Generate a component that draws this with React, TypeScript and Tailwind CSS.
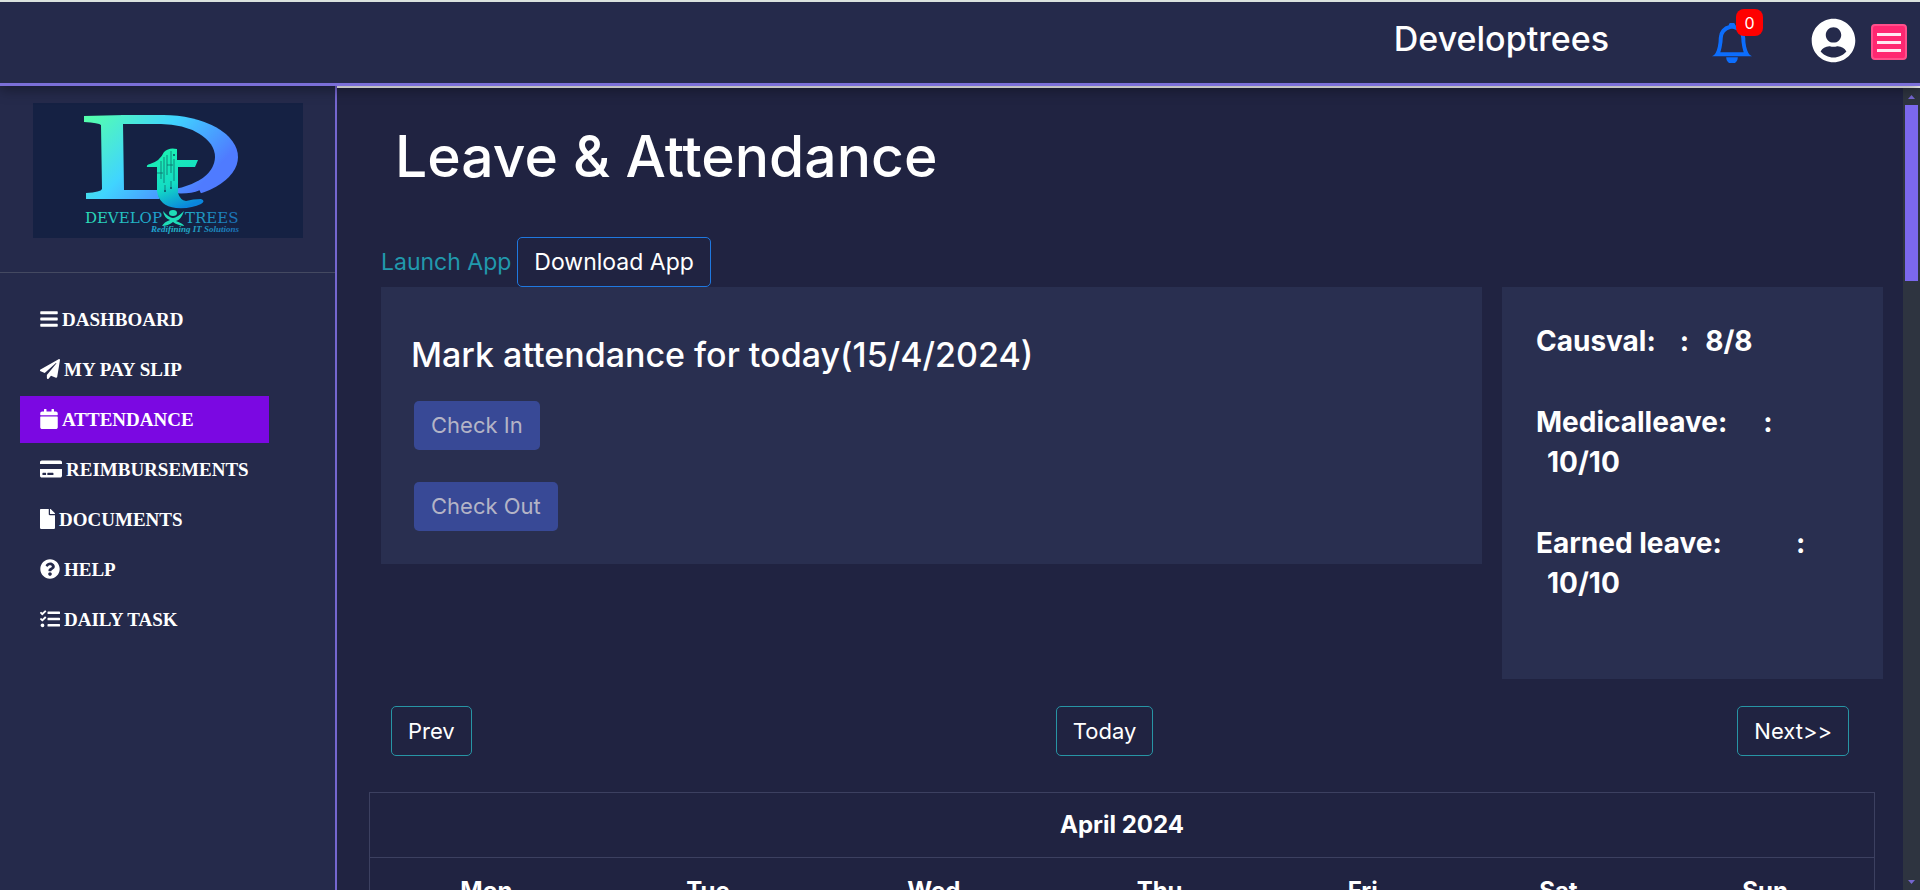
import React from "react";
import {
  FaBars,
  FaPaperPlane,
  FaCalendar,
  FaCreditCard,
  FaFile,
  FaQuestionCircle,
  FaTasks,
  FaUserCircle,
} from "react-icons/fa";
import { BsBell } from "react-icons/bs";

const navItems = [
  { label: "DASHBOARD", icon: <FaBars className="mb-0.5 h-5 w-[18px]" /> },
  { label: "MY PAY SLIP", icon: <FaPaperPlane className="mb-0.5 h-5 w-5" /> },
  { label: "ATTENDANCE", icon: <FaCalendar className="mb-0.5 h-5 w-[18px]" />, active: true },
  { label: "REIMBURSEMENTS", icon: <FaCreditCard className="mb-0.5 h-5 w-[22px]" /> },
  { label: "DOCUMENTS", icon: <FaFile className="mb-0.5 h-5 w-[15px]" /> },
  { label: "HELP", icon: <FaQuestionCircle className="mb-0.5 h-5 w-5" /> },
  { label: "DAILY TASK", icon: <FaTasks className="mb-0.5 h-5 w-5" /> },
];

const days = [
  { name: "Mon", col: "w-[15.5%]" },
  { name: "Tue", col: "w-[14%]" },
  { name: "Wed", col: "w-[16%]" },
  { name: "Thu", col: "w-[14%]" },
  { name: "Fri", col: "w-[13%]" },
  { name: "Sat", col: "w-[13%]" },
  { name: "Sun", col: "w-[14.5%]" },
];

function Logo() {
  return (
    <svg viewBox="0 0 270 135" className="block w-full bg-[#152143]" role="img" aria-label="Develop Trees">
      <defs>
        <linearGradient id="mark" x1="66" y1="4" x2="158" y2="92" gradientUnits="userSpaceOnUse">
          <stop offset="0" stopColor="#54ffae" />
          <stop offset="0.5" stopColor="#40d4ff" />
          <stop offset="1" stopColor="#4f7bff" />
        </linearGradient>
        <linearGradient id="stem" x1="125" y1="45" x2="150" y2="105" gradientUnits="userSpaceOnUse">
          <stop offset="0" stopColor="#1cf5b0" />
          <stop offset="0.6" stopColor="#14dcc4" />
          <stop offset="1" stopColor="#0a86dd" />
        </linearGradient>
        <linearGradient id="word" x1="46" y1="0" x2="206" y2="0" gradientUnits="userSpaceOnUse">
          <stop offset="0" stopColor="#2de9b4" />
          <stop offset="0.5" stopColor="#1d9fd0" />
          <stop offset="0.58" stopColor="#22b8c8" />
          <stop offset="1" stopColor="#1a6fb8" />
        </linearGradient>
        <mask id="bowl">
          <rect x="88" y="0" width="182" height="135" fill="#fff" />
          <ellipse cx="128" cy="54" rx="54" ry="33" fill="#000" />
          <rect x="88" y="21" width="40" height="66" fill="#000" />
        </mask>
      </defs>
      <g fill="url(#mark)">
        <g mask="url(#bowl)">
          <ellipse cx="130" cy="54" rx="75" ry="42" />
          <rect x="88" y="12" width="44" height="84" />
        </g>
        <path d="M51 13 L92 12 L91 21 H90 L91 87 H92 V96 H53 V90 Q68 89 69 86 L68 22 Q66 20 51 19 Z" />
      </g>
      <g fill="none" stroke="#152143" strokeWidth="17">
        <path d="M134 56 V90 Q134 99 148 99 Q161 99 170 95" />
      </g>
      <g fill="url(#stem)">
        <path d="M124 64 H114 Q113 62 117 61 Q127 58 131 49 Q136 44 144 46 V57 H165 L162 64 H145 V90 Q147 97 153 98 Q160 96 168 96 Q173 98 168 101 Q158 106 143 105 Q126 103 124 88 Z" />
      </g>
      <g fill="none" stroke="#0b5c62" strokeWidth="0.7">
        <path d="M128 58 V76 M131 54 V80 M134 52 V72 M138 48 V70 M141 56 V78 M124 70 H130 M132 82 V87 M138 78 V84 M134 62 H140" />
      </g>
      <g fill="#0b4a5c">
        <circle cx="132" cy="88" r="1" />
        <circle cx="138" cy="85" r="1" />
        <circle cx="141" cy="52" r="1" />
      </g>
      <g fill="#1fdcb8">
        <ellipse cx="140" cy="110" rx="4" ry="3" />
        <path d="M130 108 Q136 115 140 115 Q144 115 151 108 Q148 117 143 118 Q151 121 151 123 Q144 122 140 119 Q135 123 129 123 Q131 119 137 117 Q131 115 130 108 Z" />
      </g>
      <g fill="url(#word)" fontFamily="'DejaVu Serif', serif">
        <text x="129" y="120" fontSize="15" textAnchor="end">DEVELOP</text>
        <text x="152" y="120" fontSize="15">TREES</text>
        <text x="206" y="129" fontSize="9" textAnchor="end" fontStyle="italic" fontWeight="700" fontFamily="'Liberation Serif', serif">
          Redifining IT Solutions
        </text>
      </g>
    </svg>
  );
}

function Header() {
  return (
    <header className="relative z-10 flex h-[86px] shrink-0 items-start justify-end border-t-2 border-b-3 border-t-[#dbe3df] border-b-[#7b6fd8] bg-[#252a4b] pr-[13px] shadow-[0_4px_12px_rgba(0,0,0,0.35)]">
      <h2 className="mt-[17px] mr-[103px] text-[34px] leading-10 font-medium">Developtrees</h2>
      <button type="button" aria-label="Notifications" className="relative mt-[21px] mr-[59px] text-[#0d6efd]">
        <BsBell className="size-10" stroke="currentColor" strokeWidth="0.6" />
        <span className="absolute -top-3.5 left-6 flex h-[27px] w-[27px] items-center justify-center rounded-lg bg-[#ff0000] text-base text-white">
          0
        </span>
      </button>
      <button type="button" aria-label="Account" className="mt-4 mr-[15px]">
        <FaUserCircle className="size-[45px]" />
      </button>
      <button
        type="button"
        aria-label="Menu"
        className="mt-[22px] flex size-9 flex-col items-center justify-center gap-[5px] rounded-sm border-2 border-[#ff4f8b] bg-[#ff2771]"
      >
        <span className="h-[3px] w-6 bg-[#ffe9f2]" />
        <span className="h-[3px] w-6 bg-[#ffe9f2]" />
        <span className="h-[3px] w-6 bg-[#ffe9f2]" />
      </button>
    </header>
  );
}

function Sidebar() {
  return (
    <aside className="w-[337px] shrink-0 border-r-2 border-[#7566cf] bg-[#252a4b]">
      <div className="border-b border-[#444961] pt-[17px] pr-8 pb-[34px] pl-[33px]">
        <Logo />
      </div>
      <nav className="mt-[23px] ml-5 flex w-fit flex-col gap-[3px] font-['Liberation_Serif',serif] text-[19px] font-bold">
        {navItems.map((item) => (
          <a
            key={item.label}
            href="#"
            className={
              item.active
                ? "flex h-[47px] items-center gap-1 bg-[#7b08e2] px-5"
                : "flex h-[47px] items-center gap-1 px-5"
            }
          >
            {item.icon}
            <span className="pt-0.5">{item.label}</span>
          </a>
        ))}
      </nav>
    </aside>
  );
}

function Scrollbar() {
  return (
    <div aria-hidden="true" className="flex w-[17px] shrink-0 flex-col items-center bg-[#2e3440]">
      <svg viewBox="0 0 17 17" className="size-[17px]">
        <path d="M5 11 L8.5 7 L12 11 Z" fill="#7566cf" />
      </svg>
      <div className="h-[22%] w-[13px] bg-[#7b68ee]" />
      <svg viewBox="0 0 17 17" className="mt-auto size-[17px]">
        <path d="M5 7 L8.5 11 L12 7 Z" fill="#7566cf" />
      </svg>
    </div>
  );
}

const outlineButton = "h-[50px] rounded-[5px] border border-[#2795a5] px-4";
const checkButton = "block h-[49px] rounded-[5px] bg-[#384996] px-[17px] text-[#b4b4c6]";

function Balance({ label, gap, value, wrap }: { label: string; gap: string; value: string; wrap?: boolean }) {
  return (
    <p>
      {label}
      <span className={gap}>:</span>
      {wrap ? <span className="block pl-[11px]">{value}</span> : <span className="ml-4">{value}</span>}
    </p>
  );
}

export default function App() {
  return (
    <div className="flex h-screen flex-col overflow-hidden bg-[#202341] font-[Inter,sans-serif] text-white">
      <Header />
      <div className="flex min-h-0 flex-1">
        <Sidebar />
        <div className="flex min-w-0 flex-1 border-t-2 border-white">
          <main className="min-w-0 flex-1 overflow-y-auto pr-5 pl-11 text-[22px] [scrollbar-width:none]">
            <h1 className="mt-[35px] ml-3.5 text-[57px] leading-[68px] font-medium">Leave &amp; Attendance</h1>
            <div className="mt-[46px] flex items-center gap-1.5 text-[23px]">
              <a href="#" className="text-[#2199ad]">Launch App</a>
              <button type="button" className="h-[50px] rounded-[5px] border border-[#1f78e0] px-4">
                Download App
              </button>
            </div>
            <div className="flex items-start gap-5">
              <section className="h-[277px] flex-1 bg-[#292f50] px-[30px] pt-12">
                <h2 className="text-[34px] leading-10 font-medium">Mark attendance for today(15/4/2024)</h2>
                <div className="mt-[26px] ml-[3px] flex flex-col items-start gap-8">
                  <button type="button" disabled className={checkButton}>Check In</button>
                  <button type="button" disabled className={checkButton}>Check Out</button>
                </div>
              </section>
              <section className="flex h-[392px] w-[381px] flex-col gap-[41px] bg-[#292f50] px-[34px] pt-[34px] text-[28px] leading-10 font-bold">
                <Balance label="Causval:" gap="ml-6" value="8/8" />
                <Balance label="Medicalleave:" gap="ml-9" value="10/10" wrap />
                <Balance label="Earned leave:" gap="ml-[74px]" value="10/10" wrap />
              </section>
            </div>
            <div className="mt-[27px] mr-[34px] ml-2.5 flex justify-between">
              <button type="button" className={outlineButton}>Prev</button>
              <button type="button" className={outlineButton}>Today</button>
              <button type="button" className={outlineButton}>Next&gt;&gt;</button>
            </div>
            <div className="mt-9 mr-2 -ml-3">
              <table className="w-full table-fixed border-collapse border border-[#3c4060] text-2xl font-bold">
                <colgroup>
                  {days.map((day) => (
                    <col key={day.name} className={day.col} />
                  ))}
                </colgroup>
                <thead>
                  <tr className="h-[65px] border-b border-[#3c4060]">
                    <th colSpan={7}>April 2024</th>
                  </tr>
                  <tr className="h-[66px]">
                    {days.map((day) => (
                      <th key={day.name}>{day.name}</th>
                    ))}
                  </tr>
                </thead>
              </table>
            </div>
          </main>
          <Scrollbar />
        </div>
      </div>
    </div>
  );
}
